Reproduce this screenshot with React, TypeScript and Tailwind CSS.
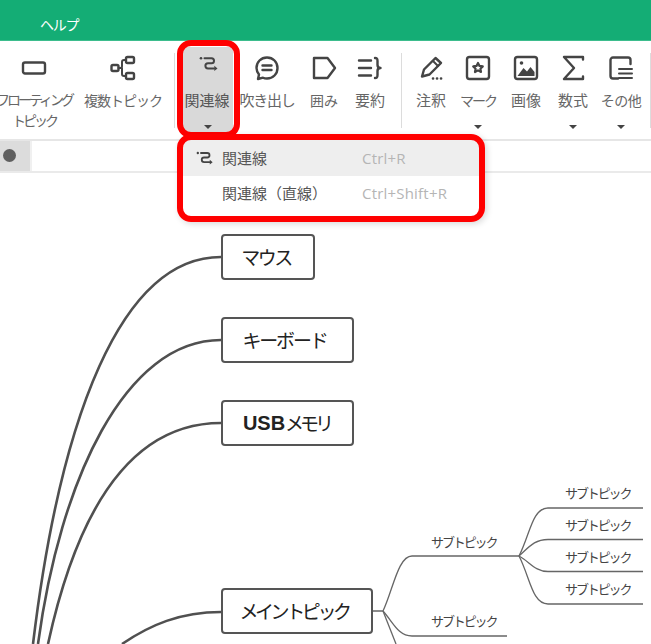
import React from "react";

const font = { fontFamily: '"Noto Sans CJK JP", "Noto Sans", sans-serif' };

function Svg({ children }: { children: React.ReactNode }) {
  return (
    <svg width="30" height="30" viewBox="0 0 30 30" fill="none" stroke="#444" strokeWidth="2.4" strokeLinecap="round" strokeLinejoin="round">
      {children}
    </svg>
  );
}

const RelationPath = () => (
  <>
    <circle cx="8" cy="5.2" r="1.3" fill="#444" stroke="none" />
    <path d="M11.500 5.200H18.500a2.500 2.500 0 0 1 0 5H15a2.600 2.600 0 0 0 0 5.200H21" stroke="#444" strokeWidth="2" strokeLinecap="round" fill="none" />
    <path d="M21.300 12.800l3.200 2.600-3.200 2.600z" fill="#444" stroke="none" />
  </>
);

const icons: Record<string, React.ReactNode> = {
  float: <rect x="4" y="9.5" width="22" height="11" rx="2" />,
  multi: (
    <>
      <rect x="3.5" y="12" width="7" height="6" rx="1.5" />
      <rect x="18" y="4" width="8" height="6" rx="1.5" />
      <rect x="18" y="20" width="8" height="6" rx="1.5" />
      <path d="M10.5 15h2c1.5 0 1.5-1 1.5-2V9c0-1.5 1-2 2-2h2M14 15v6c0 1.500 1 2 2 2h2" strokeWidth="2" />
    </>
  ),
  relation: <RelationPath />,
  callout: (
    <>
      <path d="M15 4.500c6 0 10.500 4.500 10.500 10.500S21 25.500 15 25.500c-1.500 0-3-.3-4-.8L6 26l1-4.500C5.500 19.500 4.500 17.500 4.500 15 4.500 9 9 4.500 15 4.500z" />
      <path d="M10.500 12.500h9M10.500 17h9" />
    </>
  ),
  boundary: <path d="M5 5h13.500L26 15l-7.500 10H5z" />,
  summary: (
    <>
      <path d="M4 7.500h12M4 15h12M4 22.500h12" />
      <path d="M20 5c2.500 0 2.500 1 2.500 3v4c0 2 1 3 3 3-2 0-3 1-3 3v4c0 2 0 3-2.500 3" />
    </>
  ),
  note: (
    <>
      <path d="M6 23.500l2-7L19.500 5l5.500 5-11.500 11.500z" />
      <path d="M17 8l5 5" strokeWidth="2" />
      <path d="M17 25.500h.1M21 25.500h.1M25 25.500h.1" strokeWidth="2.600" />
    </>
  ),
  mark: (
    <>
      <rect x="4" y="4" width="22" height="22" rx="2.500" />
      <path d="M15 10l1.500 2.900 3.300.5-2.400 2.300.6 3.300-3-1.600-3 1.600.6-3.300-2.400-2.300 3.300-.5z" strokeWidth="2.200" />
    </>
  ),
  image: (
    <>
      <rect x="4" y="4" width="22" height="22" rx="2.500" />
      <circle cx="10.500" cy="10" r="1.800" fill="#444" stroke="none" />
      <path d="M6.500 23l6-8 3.500 3.500 3.500-4.500 4 5v4z" fill="#444" stroke="none" />
    </>
  ),
  formula: <path d="M25 6.500V4H6l10 11L6 26h19v-2.500" />,
  other: (
    <>
      <path d="M12 25.500H7a2.500 2.500 0 0 1-2.500-2.500V7A2.500 2.500 0 0 1 7 4.500h15A2.500 2.500 0 0 1 24.500 7v4" />
      <path d="M13 16h13M13 20.500h13M13 25h13" strokeWidth="2" />
    </>
  ),
};

function Tool({ icon, label, className, caret, active }: { icon: string; label: React.ReactNode; className: string; caret?: boolean; active?: boolean }) {
  return (
    <div className={`relative flex flex-col items-center shrink-0 h-[87px] rounded-[3px] ${active ? "bg-[#d9d9d9] text-[#555]" : "text-[#666]"} ${className}`}>
      <div className="h-[41px] flex items-center justify-center">
        <Svg>{icons[icon]}</Svg>
      </div>
      <div className="text-[15px] leading-[21px] text-center whitespace-nowrap mt-[1px]">{label}</div>
      {caret && <div className="absolute left-1/2 -translate-x-1/2 bottom-[5px] w-0 h-0 border-x-[4px] border-x-transparent border-t-[4px] border-t-[#444]" />}
    </div>
  );
}

const Sep = ({ className }: { className: string }) => <div className={`w-[1px] h-[75px] mt-[6px] bg-[#dcdcdc] shrink-0 ${className}`} />;

function Node({ text, className }: { text: React.ReactNode; className: string }) {
  return (
    <div className={`absolute left-[221px] h-[46px] flex items-center justify-center border-2 border-[#555] rounded-[4px] bg-white text-[19px] text-[#222] ${className}`}>
      {text}
    </div>
  );
}

function Sub({ className }: { className: string }) {
  return <div className={`absolute text-[13px] leading-[18px] tracking-[-2.1px] text-[#444] whitespace-nowrap ${className}`}>サブトピック</div>;
}

export default function App() {
  return (
    <div className="relative w-[651px] h-[644px] overflow-hidden bg-white flex flex-col" style={font}>
      <header className="h-[41px] shrink-0 bg-[#14ad75] border-b border-b-[#3dbd8d] flex items-center pl-[40px] text-[14px] tracking-[-1.3px] text-white pt-[9px]">ヘルプ</header>

      <div className="h-[100px] shrink-0 border-b-2 border-b-[#e6e6e6] flex items-start pt-[6px] pl-0 -ml-[6px]">
        <Tool icon="float" className="w-[80px]" label={<span className="block text-[14px] tracking-[-3px]">フローティング<br />トピック</span>} />
        <Tool icon="multi" className="w-[78px] ml-[10px]" label={<span className="text-[14px] tracking-[-1px]">複数トピック</span>} />
        <Sep className="ml-[12px]" />
        <Tool icon="relation" active caret className="w-[50px] ml-[8px]" label={<span className="relative -left-[1px]">関連線</span>} />
        <Tool icon="callout" className="w-[58px] ml-[5px]" label={<span className="tracking-[-1.300px]">吹き出し</span>} />
        <Tool icon="boundary" className="w-[40px] ml-[8px]" label={<span className="text-[14px]">囲み</span>} />
        <Tool icon="summary" className="w-[40px] ml-[6px]" label="要約" />
        <Sep className="ml-[11px]" />
        <Tool icon="note" className="w-[40px] ml-[9px]" label="注釈" />
        <Tool icon="mark" caret className="w-[46px] ml-[4px]" label={<span className="text-[14px] tracking-[-2px]">マーク</span>} />
        <Tool icon="image" className="w-[46px] ml-[2px]" label="画像" />
        <Tool icon="formula" caret className="w-[46px] ml-[1px]" label="数式" />
        <Tool icon="other" caret className="w-[46px] ml-[2px]" label={<span className="text-[14px] tracking-[-0.5px]">その他</span>} />
        <Sep className="ml-[6px]" />
      </div>

      <div className="h-[32px] shrink-0 border-b-2 border-b-[#eaeaea] flex">
        <div className="w-[30px] bg-[#dcdcdc] flex items-center pl-[3px] pb-[2px]">
          <div className="w-[13px] h-[13px] rounded-full bg-[#5f5f5f]" />
        </div>
        <div className="w-[2px] bg-[#f0f0f0]" />
      </div>

      <main className="relative flex-1 overflow-hidden">
        <svg className="absolute left-0 top-[-173px]" width="651" height="644" viewBox="0 0 651 644" fill="none">
          <g stroke="#505050" strokeWidth="2.600">
            <path d="M33 644C60 420 120 257 221 257" />
            <path d="M38 644C60 480 125 340 221 340" />
            <path d="M48 644C75 520 125 423 221 423" />
            <path d="M122 644C150 625 180 612 221 612" />
          </g>
          <g stroke="#666" strokeWidth="1.300">
            <path d="M373 611H383C393 590 398 556 412 556H519" />
            <path d="M383 611C393 622 398 636 412 636H507" />
            <path d="M383 611L396 644" />
            <path d="M519 556C530 535 532 508 548 508H643" />
            <path d="M519 556C530 546 535 539.500 548 539.500H643" />
            <path d="M519 556C530 562 535 571.500 548 571.500H643" />
            <path d="M519 556C530 577 532 604 548 604H643" />
          </g>
        </svg>
        <Node text={<span className="tracking-[-2.500px] mr-[4px]">マウス</span>} className="top-[61px] w-[94px]" />
        <Node text={<span className="tracking-[-2.200px] mr-[6px]">キーボード</span>} className="top-[144px] w-[133px]" />
        <Node text={<><b className="text-[20px] font-bold" style={{ fontFamily: '"Liberation Sans", sans-serif' }}>USB</b><span className="tracking-[-4px] mr-[2px]">メモリ</span></>} className="top-[227px] w-[133px]" />
        <Node text={<span className="tracking-[-3.400px] mr-[6px]">メイントピック</span>} className="top-[415px] w-[152px]" />
        <Sub className="left-[431px] top-[360px]" />
        <Sub className="left-[431px] top-[439px]" />
        <Sub className="left-[565px] top-[311px]" />
        <Sub className="left-[565px] top-[343px]" />
        <Sub className="left-[565px] top-[375px]" />
        <Sub className="left-[565px] top-[407px]" />
      </main>

      {/* dropdown menu */}
      <div className="absolute left-[183px] top-[140px] w-[297px] h-[77px] bg-white rounded-[8px] text-[15px] overflow-hidden">
        <div className="h-[36px] bg-[#eeeeee] flex items-center text-[#555]">
          <svg width="18" height="14" viewBox="6 3 20 15.500" fill="none" className="ml-[13px] shrink-0"><RelationPath /></svg>
          <span className="ml-[8px] w-[140px]">関連線</span>
          <span className="text-[#b5b5b5] tracking-[0.2px]" style={{ fontFamily: '"Open Sans", sans-serif' }}>Ctrl+R</span>
        </div>
        <div className="h-[35px] flex items-center text-[#555]">
          <span className="ml-[39px] w-[140px] whitespace-nowrap">関連線（直線）</span>
          <span className="text-[#b5b5b5] tracking-[0.2px]" style={{ fontFamily: '"Open Sans", sans-serif' }}>Ctrl+Shift+R</span>
        </div>
      </div>

      {/* red annotation outlines */}
      <div className="absolute left-[177px] top-[40px] w-[63px] h-[98px] border-[6px] border-[#ff0000] rounded-[14px]" />
      <div className="absolute left-[177px] top-[134px] w-[308px] h-[88px] border-[6px] border-[#ff0000] rounded-[14px] shadow-[2px_2px_6px_rgba(0,0,0,0.15)]" />
    </div>
  );
}
